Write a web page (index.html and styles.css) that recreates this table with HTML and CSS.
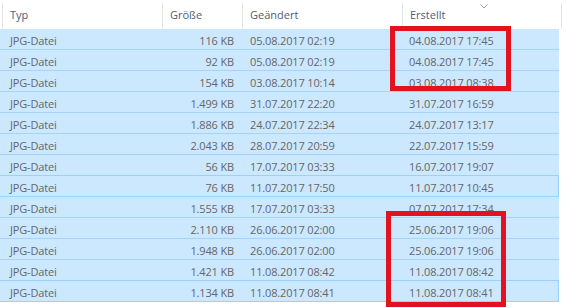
FILE: index.html
```html
<!DOCTYPE html>
<html lang="de">
<head>
<meta charset="utf-8">
<title>Details</title>
<link rel="stylesheet" href="styles.css">
</head>
<body>
<div class="view">
  <div class="header">
    <div class="hcell typ">Typ</div>
    <div class="hcell">Größe</div>
    <div class="hcell">Geändert</div>
    <div class="hcell sorted">Erstellt
      <svg class="chev" width="8" height="5" viewBox="0 0 8 5"><polyline points="0.5,0.5 4,4 7.5,0.5" fill="none" stroke="#a3a3a3" stroke-width="1"/></svg>
    </div>
  </div>
  <div class="list">
    <div class="row"><span class="c1">JPG-Datei</span><span class="c2">116 KB</span><span class="c3">05.08.2017 02:19</span><span class="c4">04.08.2017 17:45</span></div>
    <div class="row"><span class="c1">JPG-Datei</span><span class="c2">92 KB</span><span class="c3">05.08.2017 02:19</span><span class="c4">04.08.2017 17:45</span></div>
    <div class="row"><span class="c1">JPG-Datei</span><span class="c2">154 KB</span><span class="c3">03.08.2017 10:14</span><span class="c4">03.08.2017 08:38</span></div>
    <div class="row"><span class="c1">JPG-Datei</span><span class="c2">1.499 KB</span><span class="c3">31.07.2017 22:20</span><span class="c4">31.07.2017 16:59</span></div>
    <div class="row"><span class="c1">JPG-Datei</span><span class="c2">1.886 KB</span><span class="c3">24.07.2017 22:34</span><span class="c4">24.07.2017 13:17</span></div>
    <div class="row"><span class="c1">JPG-Datei</span><span class="c2">2.043 KB</span><span class="c3">28.07.2017 20:59</span><span class="c4">22.07.2017 15:59</span></div>
    <div class="row"><span class="c1">JPG-Datei</span><span class="c2">56 KB</span><span class="c3">17.07.2017 03:33</span><span class="c4">16.07.2017 19:07</span></div>
    <div class="row focus"><span class="c1">JPG-Datei</span><span class="c2">76 KB</span><span class="c3">11.07.2017 17:50</span><span class="c4">11.07.2017 10:45</span></div>
    <div class="row"><span class="c1">JPG-Datei</span><span class="c2">1.555 KB</span><span class="c3">17.07.2017 03:33</span><span class="c4">07.07.2017 17:34</span></div>
    <div class="row"><span class="c1">JPG-Datei</span><span class="c2">2.110 KB</span><span class="c3">26.06.2017 02:00</span><span class="c4">25.06.2017 19:06</span></div>
    <div class="row"><span class="c1">JPG-Datei</span><span class="c2">1.948 KB</span><span class="c3">26.06.2017 02:00</span><span class="c4">25.06.2017 19:06</span></div>
    <div class="row"><span class="c1">JPG-Datei</span><span class="c2">1.421 KB</span><span class="c3">11.08.2017 08:42</span><span class="c4">11.08.2017 08:42</span></div>
    <div class="row focus"><span class="c1">JPG-Datei</span><span class="c2">1.134 KB</span><span class="c3">11.08.2017 08:41</span><span class="c4">11.08.2017 08:41</span></div>
  </div>
  <div class="mark mark-top"></div>
  <div class="mark mark-bottom"></div>
</div>
</body>
</html>
```
FILE: styles.css
```css
html, body {
  margin: 0;
  padding: 0;
  background: #ffffff;
}
body {
  font-family: "Segoe UI", "Open Sans", "Noto Sans", sans-serif;
  font-size: 11px;
}
.view {
  position: relative;
  width: 569px;
  height: 308px;
  overflow: hidden;
}
.header {
  display: grid;
  grid-template-columns: 160px 80px 160px 160px;
  margin-left: 2px;
  height: 29px;
}
.hcell {
  position: relative;
  box-sizing: border-box;
  border-left: 1px solid #e5e5e5;
  margin-top: 3px;
  padding: 0 0 0 7px;
  line-height: 24px;
  color: #4c607a;
}
.hcell.sorted {
  border-right: 1px solid #e5e5e5;
}
.chev {
  position: absolute;
  left: 77px;
  top: 1px;
}
.list {
  width: 559px;
}
.row {
  box-sizing: border-box;
  display: grid;
  grid-template-columns: 162px 80px 160px 1fr;
  height: 21px;
  padding-top: 4px;
  line-height: 16px;
  background: #cce8ff;
  border-bottom: 1px solid #a5d4f8;
  color: #666666;
  white-space: nowrap;
  letter-spacing: -0.15px;
}
.row.focus {
  box-shadow: inset -1px 0 0 #99d1ff, 0 -1px 0 #99d1ff;
  border-bottom-color: #99d1ff;
}
.c1 { padding-left: 10px; }
.c2 { text-align: right; padding-right: 8px; }
.c3 { padding-left: 8px; }
.c4 { padding-left: 7px; }
.mark {
  position: absolute;
  box-sizing: border-box;
  border: 5px solid #e2131e;
}
.mark-top {
  left: 390px;
  top: 26px;
  width: 121px;
  height: 65px;
}
.mark-bottom {
  left: 386px;
  top: 211px;
  width: 120px;
  height: 96px;
}
```
